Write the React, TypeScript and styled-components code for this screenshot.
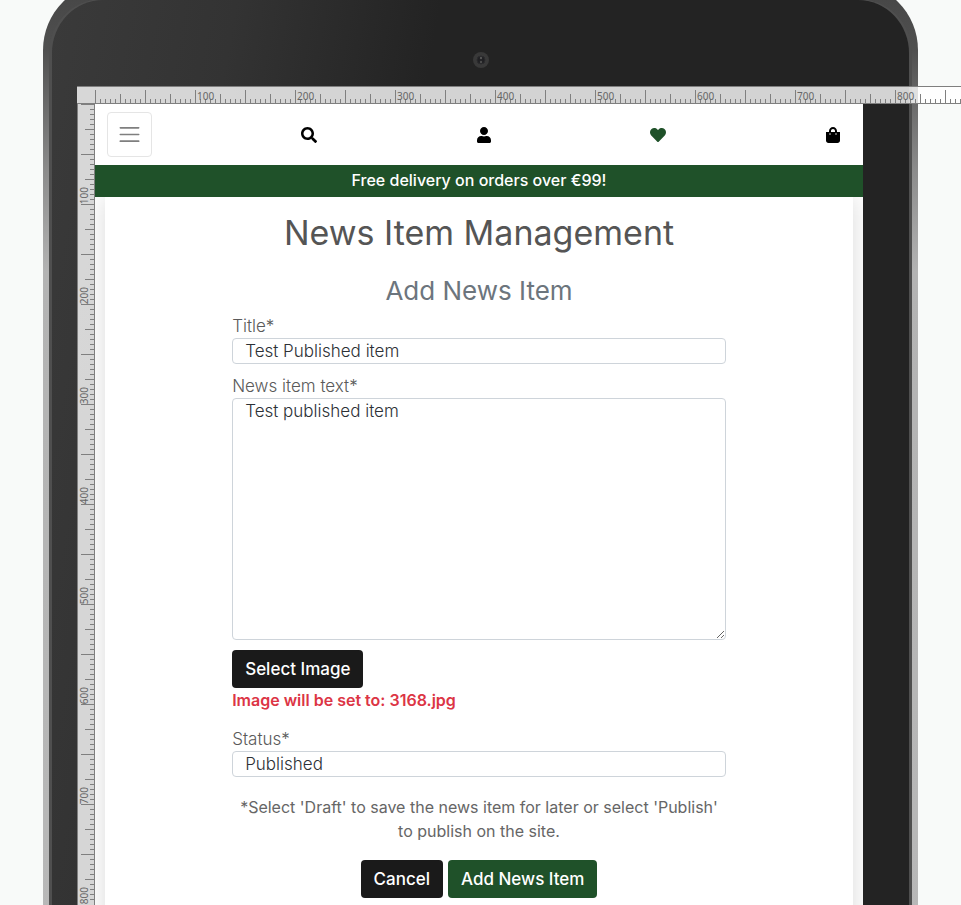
import React from "react";
import styled, { createGlobalStyle, css } from "styled-components";
import { FaSearch, FaUser, FaHeart, FaShoppingBag } from "react-icons/fa";

const GlobalStyle = createGlobalStyle`
  *, *::before, *::after { box-sizing: border-box; }
  html, body { margin: 0; height: 100%; background: #f8faf9; }
  #root { height: 100%; }
  body, button, input, textarea, select { font-family: Inter, "Open Sans", sans-serif; }
`;

const green = "#1f5129";
const tick = "#7f7f7f";

const Page = styled.div`
  height: 100vh;
  overflow: hidden;
`;

const Device = styled.div`
  width: calc(100% - 86px);
  max-width: 875px;
  margin: -18px auto 0;
  padding: 17px 6px 0;
  border-radius: 68px 68px 0 0;
  background: linear-gradient(to bottom, #454545 0, #505050 70px, #8c8c8c 190px, #b3b3b3 290px, #b8b8b8 100%);
`;

const Bezel = styled.div`
  display: flex;
  flex-direction: column;
  min-height: 100vh;
  padding: 0 46px 0 25px;
  border: solid #4f4f4f;
  border-width: 1px 3px 0;
  border-radius: 54px 54px 0 0;
  background: linear-gradient(100deg, #3a3a3a 0, #333 18%, #232323 38%, #232323 100%);
`;

const Camera = styled.svg`
  display: block;
  width: 18px;
  height: 18px;
  /* centres the lens on the device, whose side margins differ */
  margin: 51px auto 17px;
  transform: translateX(11px);
`;

const Viewport = styled.div`
  display: grid;
  grid-template-columns: 18px minmax(0, 1fr);
  grid-template-rows: 18px auto;
`;

const TopRuler = styled.div`
  grid-column: 1 / -1;
  width: 100vw;
  display: flex;
  padding-left: 18px;
  border-top: 1px solid ${tick};
  border-bottom: 1px solid ${tick};
  background: rgba(255, 255, 255, 0.8);
`;

const SideRuler = styled.div`
  border-left: 1px solid ${tick};
  border-right: 1px solid ${tick};
  background: rgba(255, 255, 255, 0.8);
`;

const labelText = css`
  font: 10px/12px "Noto Sans", sans-serif;
  color: #666;
`;

const TopSegment = styled.span`
  ${labelText}
  flex: 0 0 100px;
  padding: 3px 0 0 2px;
  background:
    repeating-linear-gradient(90deg, ${tick} 0 1px, transparent 1px 50px) bottom / 100% 13px no-repeat,
    repeating-linear-gradient(90deg, ${tick} 0 1px, transparent 1px 25px) bottom / 100% 9px no-repeat,
    repeating-linear-gradient(90deg, ${tick} 0 1px, transparent 1px 5px) bottom / 100% 4px no-repeat;
`;

const SideSegment = styled.span`
  display: flex;
  align-items: flex-end;
  height: 100px;
  background:
    repeating-linear-gradient(180deg, ${tick} 0 1px, transparent 1px 50px) right / 13px 100% no-repeat,
    repeating-linear-gradient(180deg, ${tick} 0 1px, transparent 1px 25px) right / 9px 100% no-repeat,
    repeating-linear-gradient(180deg, ${tick} 0 1px, transparent 1px 5px) right / 4px 100% no-repeat;
`;

const SideLabel = styled.span`
  ${labelText}
  writing-mode: vertical-rl;
  transform: rotate(180deg);
`;

const Screen = styled.div`
  min-width: 0;
  overflow: hidden;
  background: #fff;
`;

const Nav = styled.nav`
  position: relative;
  z-index: 1;
  display: flex;
  align-items: center;
  justify-content: space-between;
  padding: 8px 12px;
  background: #fff;
`;

const MenuButton = styled.button`
  display: grid;
  place-items: center;
  width: 45px;
  height: 45px;
  padding: 0;
  border: 1px solid #e5e5e5;
  border-radius: 4px;
  background: #fff;
`;

const NavLink = styled.a<{ $active?: boolean }>`
  display: flex;
  padding: 0 10px;
  font-size: 16px;
  color: ${(p) => (p.$active ? green : "#000")};
`;

const Banner = styled.p`
  position: relative;
  z-index: 1;
  margin: 0;
  padding-bottom: 2px;
  font-size: 16px;
  font-weight: 500;
  line-height: 30px;
  text-align: center;
  color: #fff;
  background: ${green};
`;

const Main = styled.main`
  margin: 0 10px;
  padding: 12px 0 60px;
  background: #fff;
  box-shadow: 0 0 24px rgba(0, 0, 0, 0.15);
  color: #5a5a5a;
  text-align: center;
`;

const Title = styled.h1`
  margin: 0 0 19px;
  font-size: 34px;
  font-weight: 400;
  line-height: 48px;
  color: #555;
`;

const Subtitle = styled.h2`
  margin: 0;
  font-size: 26px;
  font-weight: 400;
  line-height: 30px;
  color: #6c757d;
`;

const Form = styled.form`
  width: 66%;
  margin: 0 auto;
  padding-top: 8px;
`;

const Field = styled.div`
  display: flex;
  flex-direction: column;
  text-align: left;
  margin-bottom: 10px;
`;

const Label = styled.label`
  font-size: 17px;
  font-weight: 300;
  line-height: 24px;
`;

const control = css`
  display: block;
  width: 100%;
  padding: 0 12px;
  border: 1px solid #ced4da;
  border-radius: 4px;
  background: #fff;
  color: #2d3136;
  font-size: 17px;
  font-weight: 300;
  line-height: 24px;
  outline: none;
`;

const Input = styled.input`
  ${control}
  height: 26px;
`;

const TextArea = styled.textarea`
  ${control}
  height: 242px;
  resize: vertical;
`;

const Select = styled.select`
  ${control}
  height: 26px;
  appearance: none;
`;

const Button = styled.button<{ $primary?: boolean }>`
  height: 38px;
  padding: 0 13px;
  border: 0;
  border-radius: 4px;
  background: ${(p) => (p.$primary ? green : "#1a1a1a")};
  color: #fff;
  font-size: 17px;
  font-weight: 500;
`;

const ImageRow = styled.div`
  text-align: left;
  margin-bottom: 15px;
`;

const FileNote = styled.p`
  margin: 0;
  font-size: 16px;
  font-weight: 600;
  line-height: 24px;
  color: #dc3545;
`;

const Help = styled.p`
  margin: 18px 0 17px;
  padding: 0 5px;
  font-size: 16px;
  font-weight: 400;
  line-height: 24px;
  color: #666;
`;

const Actions = styled.div`
  display: flex;
  justify-content: center;
  gap: 5px;
`;

const topMarks = Array.from({ length: 9 }, (_, i) => i * 100);
const sideMarks = Array.from({ length: 8 }, (_, i) => (i + 1) * 100);

export default function App() {
  return (
    <Page>
      <GlobalStyle />
      <Device>
        <Bezel>
          <Camera viewBox="0 0 18 18" aria-hidden="true">
            <circle cx="9" cy="9" r="8" fill="#393939" />
            <circle cx="9" cy="9" r="4" fill="#202023" stroke="#2b2b2d" />
            <circle cx="9" cy="7" r="1.2" fill="#555" />
            <circle cx="9" cy="11" r="1.2" fill="#4c4c4c" />
          </Camera>
          <Viewport>
            <TopRuler>
              {topMarks.map((n) => (
                <TopSegment key={n}>{n > 0 && n}</TopSegment>
              ))}
            </TopRuler>
            <SideRuler>
              {sideMarks.map((n) => (
                <SideSegment key={n}>
                  <SideLabel>{n}</SideLabel>
                </SideSegment>
              ))}
            </SideRuler>
            <Screen>
              <Nav aria-label="Main">
                <MenuButton type="button" aria-label="Menu">
                  <svg width="25" height="25" viewBox="0 0 30 30" aria-hidden="true">
                    <path d="M4 7h22M4 15h22M4 23h22" stroke="#7f7f7f" strokeWidth="2" strokeLinecap="round" />
                  </svg>
                </MenuButton>
                <NavLink href="#search" aria-label="Search"><FaSearch /></NavLink>
                <NavLink href="#account" aria-label="Account"><FaUser /></NavLink>
                <NavLink href="#wishlist" aria-label="Wishlist" $active><FaHeart /></NavLink>
                <NavLink href="#bag" aria-label="Bag"><FaShoppingBag /></NavLink>
              </Nav>
              <Banner>Free delivery on orders over €99!</Banner>
              <Main>
                <Title>News Item Management</Title>
                <Subtitle>Add News Item</Subtitle>
                <Form onSubmit={(e) => e.preventDefault()}>
                  <Field>
                    <Label htmlFor="title">Title*</Label>
                    <Input id="title" defaultValue="Test Published item" />
                  </Field>
                  <Field>
                    <Label htmlFor="text">News item text*</Label>
                    <TextArea id="text" defaultValue="Test published item" />
                  </Field>
                  <ImageRow>
                    <Button type="button">Select Image</Button>
                    <FileNote>Image will be set to: 3168.jpg</FileNote>
                  </ImageRow>
                  <Field>
                    <Label htmlFor="status">Status*</Label>
                    <Select id="status" defaultValue="Published">
                      <option>Draft</option>
                      <option>Published</option>
                    </Select>
                  </Field>
                  <Help>
                    *Select 'Draft' to save the news item for later or select 'Publish' to publish on the site.
                  </Help>
                  <Actions>
                    <Button type="button">Cancel</Button>
                    <Button type="submit" $primary>Add News Item</Button>
                  </Actions>
                </Form>
              </Main>
            </Screen>
          </Viewport>
        </Bezel>
      </Device>
    </Page>
  );
}
